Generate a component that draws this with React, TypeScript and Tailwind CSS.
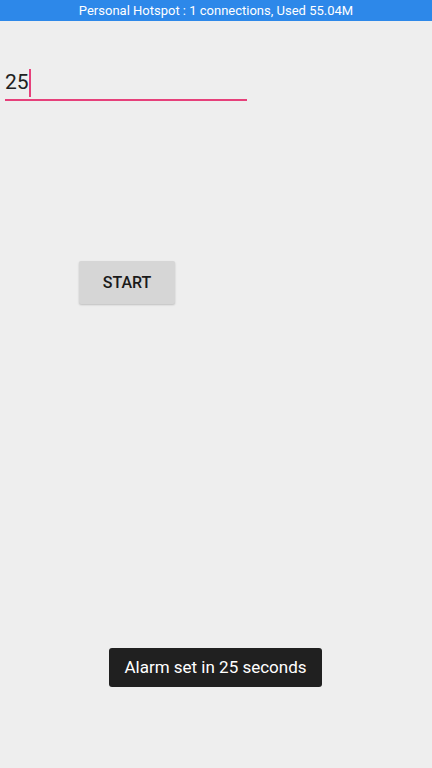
export default function App() {
  return (
    <div
      className="relative h-[768px] w-[432px] overflow-hidden bg-[#eeeeee]"
      style={{ fontFamily: "Roboto, 'Noto Sans', sans-serif" }}
    >
      {/* Status bar */}
      <div className="flex h-[21px] items-center justify-center bg-[#2d88e9] text-[13px] text-white">
        Personal Hotspot : 1 connections, Used 55.04M
      </div>

      {/* Seconds input */}
      <div className="ml-[5px] mt-[47px] w-[242px]">
        <div className="flex h-[29px] items-center text-[21px] leading-none text-[#212121]">
          <span>25</span>
          <span className="h-[28px] w-[2px] bg-[#e6407a]" />
        </div>
        <div className="mt-[2px] h-[2px] bg-[#e6407a]" />
      </div>

      {/* Start button */}
      <div className="ml-[79px] mt-[160px]">
        <button className="flex h-[43px] w-[96px] items-center justify-center rounded-[2px] bg-[#d6d6d6] text-[16px] font-medium text-[#1a1a1a] shadow-[0_1px_2px_rgba(0,0,0,0.2)]">
          START
        </button>
      </div>

      {/* Toast */}
      <div className="absolute left-[109px] top-[648px] flex h-[39px] w-[213px] items-center justify-center rounded-[3px] bg-[#202020] text-[17px] text-white">
        Alarm set in 25 seconds
      </div>
    </div>
  );
}
